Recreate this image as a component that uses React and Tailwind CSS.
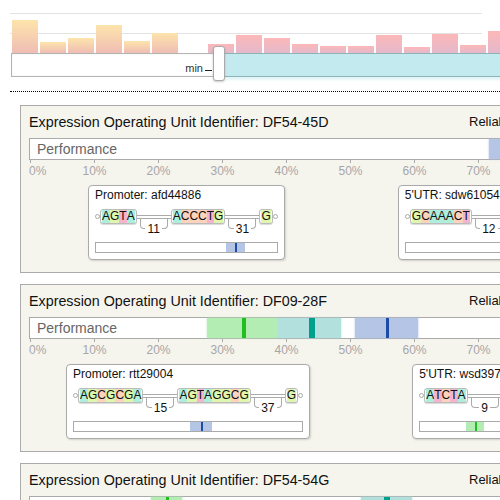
const histogram = [33, 11, 15, 28, 12, 20, 0, 9, 18, 15, 9, 7, 7, 18, 6, 19, 8, 22];

const letterBg = {
  A: "bg-[#aeeedc]",
  C: "bg-[#fdd3bd]",
  G: "bg-[#e0f6ae]",
  T: "bg-[#f5b3cd]",
};

const tones = {
  blue: { fill: "#b4c5e6", mark: "#1d4ca6" },
  green: { fill: "#b4edb4", mark: "#1fbf1f" },
  teal: { fill: "#b2e0dc", mark: "#00a08c" },
};

const units = [
  {
    id: "DF54-45D",
    reliability: "Reliability: 0.92",
    perf: [{ tone: "blue", from: 71.7, to: 80.5, mark: 76.2, w: 3 }],
    parts: [
      {
        offset: "ml-[59px]",
        label: "Promoter: afd44886",
        seqs: ["AGTA", "ACCCTG", "G"],
        gaps: [11, 31],
        range: { tone: "blue", from: 71.8, width: 10.5, mark: 76.8 },
      },
      {
        offset: "ml-[113px]",
        label: "5'UTR: sdw61054",
        seqs: ["GCAAACT", "TTAGCA"],
        gaps: [12],
        range: { tone: "green", from: 78, width: 10, mark: 83 },
      },
    ],
  },
  {
    id: "DF09-28F",
    reliability: "Reliability: 0.87",
    perf: [
      { tone: "green", from: 27.7, to: 38.75, mark: 33.1, w: 4 },
      { tone: "teal", from: 38.75, to: 48.6, mark: 43.6, w: 6 },
      { tone: "blue", from: 50.8, to: 60.6, mark: 55.6, w: 3 },
    ],
    parts: [
      {
        offset: "ml-[37px]",
        label: "Promoter: rtt29004",
        seqs: ["AGCGCGA", "AGTAGGCG", "G"],
        gaps: [15, 37],
        range: { tone: "blue", from: 50.7, width: 9.7, mark: 55.5 },
      },
      {
        offset: "ml-[102px]",
        label: "5'UTR: wsd39718",
        seqs: ["ATCTA", "TGCAT"],
        gaps: [9],
        range: { tone: "green", from: 35.6, width: 13.6, mark: 42.4 },
      },
    ],
  },
  {
    id: "DF54-54G",
    reliability: "Reliability: 0.95",
    perf: [
      { tone: "green", from: 18.9, to: 23.75, mark: 21.25, w: 3 },
      { tone: "teal", from: 51.7, to: 59.7, mark: 55.3, w: 6 },
    ],
    parts: [
      {
        offset: "ml-[48px]",
        label: "Promoter: kpl10392",
        seqs: ["TTGACA", "TATAAT", "G"],
        gaps: [17, 6],
        range: { tone: "green", from: 40, width: 12, mark: 46 },
      },
    ],
  },
];

function Histogram() {
  return (
    <div className="relative ml-[10px] mt-[13px] h-[40px] w-[520px]">
      <div className="absolute left-0 top-0 h-px w-[472px] bg-[#e3e3e3]" />
      <div className="absolute left-0 top-[20px] h-px w-[472px] bg-[#e3e3e3]" />
      <div className="relative flex h-full items-end gap-[2px] pl-[2px]">
        {histogram.map((h, i) => (
          <div
            key={i}
            className={
              i < 7
                ? "w-[26px] shrink-0 bg-linear-to-b from-[#fde4ab] to-[#efbdb4]"
                : "w-[26px] shrink-0 bg-linear-to-b from-[#fcb8b8] to-[#e4b9cb]"
            }
            style={{ height: h }}
          />
        ))}
      </div>
    </div>
  );
}

function RangeSlider() {
  return (
    <div className="ml-[11px] flex h-[24px] w-[520px]">
      <div className="flex h-full w-[202px] shrink-0 items-end justify-end border-y border-l border-[#b3b3b3] bg-white pr-px shadow-[inset_0_0_2px_rgba(0,0,0,0.08)]">
        <span className="mb-[2px] text-[11px] leading-[12px] text-[#333]">min</span>
        <span className="mb-[5px] ml-[2px] h-px w-[7px] bg-[#222]" />
      </div>
      <div className="relative z-10 -mt-[7px] h-[35px] w-[12px] shrink-0 rounded-[3px] border border-[#aaa] bg-white shadow-[0_1px_2px_rgba(0,0,0,0.2)]" />
      <div className="h-full flex-1 border-y border-[#8fb2b6] bg-[#c3eaee] shadow-[0_3px_2px_#e2f5f7]" />
    </div>
  );
}

function PerfBar({ ranges }) {
  return (
    <div className="relative mt-[7px] h-[22px] w-[642px] border border-[#aaa] bg-white">
      {ranges.map((r, i) => (
        <div
          key={i}
          className="absolute bottom-0 top-0"
          style={{
            left: `${r.from}%`,
            width: `${r.to - r.from}%`,
            background: tones[r.tone].fill,
            boxShadow: `0 0 2px ${tones[r.tone].fill}`,
          }}
        >
          <div
            className="absolute bottom-0 top-0"
            style={{
              left: `${((r.mark - r.from) / (r.to - r.from)) * 100}%`,
              width: r.w,
              background: tones[r.tone].mark,
            }}
          />
        </div>
      ))}
      <div className="relative pl-[7px] text-[14px] leading-[20px] text-[#666]">Performance</div>
    </div>
  );
}

function Axis() {
  const ticks = [0, 10, 20, 30, 40, 50, 60, 70, 80, 90, 100];
  return (
    <div className="ml-px flex h-[18px] gap-[63px]">
      {ticks.map((t) => (
        <div key={t} className={t === 0 ? "flex w-px flex-col items-start" : "flex w-px flex-col items-center"}>
          <div className="h-[3px] w-px shrink-0 bg-[#aaa]" />
          <div className={t === 0 ? "-ml-px mt-px whitespace-nowrap text-[12px] leading-[14px] text-[#a6a6a6]" : "mt-px whitespace-nowrap text-[12px] leading-[14px] text-[#a6a6a6]"}>
            {t}%
          </div>
        </div>
      ))}
    </div>
  );
}

function SeqBox({ seq }) {
  return (
    <div className="flex h-[15px] shrink-0 rounded-[3px] border border-[#bbb] bg-white px-px text-[12px] leading-[13px] text-[#111] shadow-[0_1px_1px_rgba(0,0,0,0.15)]">
      {seq.split("").map((c, i) => (
        <span key={i} className={letterBg[c]}>
          {c}
        </span>
      ))}
    </div>
  );
}

function Spacer({ n }) {
  return (
    <div className="flex w-[34px] shrink-0 flex-col">
      <div className="mt-[6px] h-[4px] border-y border-[#aaa] bg-white" />
      <div className="mx-[3px] h-[10px] rounded-b-[4px] border-x border-b border-[#aaa]" />
      <div className="mx-auto -mt-[6px] bg-white px-[2px] text-[12px] leading-[12px] text-[#111]">{n}</div>
    </div>
  );
}

function Dot() {
  return <div className="mt-[5px] h-[5px] w-[5px] shrink-0 rounded-full border border-[#aaa] bg-white" />;
}

function Part({ part }) {
  const t = tones[part.range.tone];
  return (
    <div className={`${part.offset} shrink-0 rounded-[4px] border border-[#aaa] bg-white px-[6px] pb-[6px] pt-[2px] shadow-[1px_1px_2px_rgba(0,0,0,0.15)]`}>
      <div className="whitespace-nowrap text-[12px] leading-[14px] text-[#111]">{part.label}</div>
      <div className="mt-[7px] flex items-start">
        <Dot />
        {part.seqs.map((s, i) => (
          <div key={i} className="flex items-start">
            <SeqBox seq={s} />
            {i < part.gaps.length && <Spacer n={part.gaps[i]} />}
          </div>
        ))}
        <Dot />
      </div>
      <div className="relative mt-[7px] h-[11px] border border-[#aaa] bg-white">
        <div
          className="absolute bottom-0 top-0"
          style={{ left: `${part.range.from}%`, width: `${part.range.width}%`, background: t.fill }}
        />
        <div
          className="absolute bottom-0 top-0 w-[2px]"
          style={{ left: `${part.range.mark}%`, background: t.mark }}
        />
      </div>
    </div>
  );
}

function UnitCard({ unit }) {
  return (
    <div className="border border-[#aaa] bg-[#f5f5ee] pb-[12px] pl-[8px] pt-[7px]">
      <div className="flex h-[18px] items-center">
        <div className="w-[440px] shrink-0 text-[14.3px] leading-[18px] text-[#111]">
          Expression Operating Unit Identifier: {unit.id}
        </div>
        <div className="-mt-[2px] text-[13px] leading-[17px] text-[#111]">{unit.reliability}</div>
      </div>
      <PerfBar ranges={unit.perf} />
      <Axis />
      <div className="mt-[7px] flex items-start">
        {unit.parts.map((p) => (
          <Part key={p.label} part={p} />
        ))}
      </div>
    </div>
  );
}

export default function App() {
  return (
    <div className="h-[500px] w-[500px] overflow-hidden bg-white font-['Liberation_Sans',Arial,sans-serif]">
      <Histogram />
      <RangeSlider />
      <div className="ml-[10px] mt-[14px] w-[520px] border-t border-dotted border-black" />
      <div className="ml-[20px] mt-[13px] flex w-[700px] flex-col gap-[11px]">
        {units.map((u) => (
          <UnitCard key={u.id} unit={u} />
        ))}
      </div>
    </div>
  );
}
